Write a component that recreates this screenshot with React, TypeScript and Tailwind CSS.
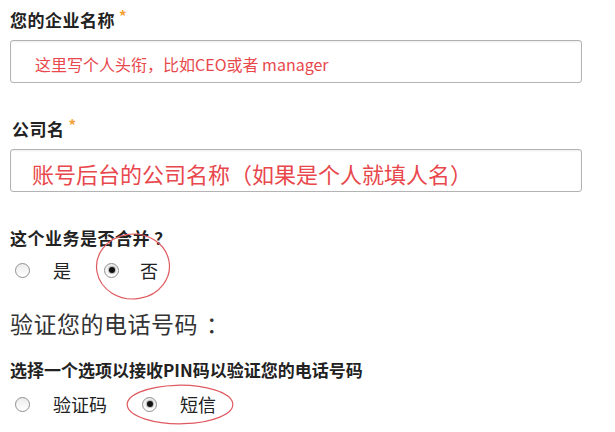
import React from "react";

const font = { fontFamily: '"Noto Sans CJK SC", "Liberation Sans", sans-serif' };

function Label({ text, required }: { text: string; required?: boolean }) {
  return (
    <div className="flex items-start text-[17px] font-bold leading-5 tracking-[0.5px] text-[#222]">
      <span>{text}</span>
      {required && (
        <span className="ml-[4px] mt-[-4px] text-[15px] font-bold text-[#f5a033]">*</span>
      )}
    </div>
  );
}

function Radio({ checked }: { checked?: boolean }) {
  return (
    <span className="flex h-[15px] w-[15px] shrink-0 items-center justify-center rounded-full border border-[#8f8f8f] bg-gradient-to-b from-[#ececec] to-white">
      {checked && <span className="h-[6px] w-[6px] rounded-full bg-[#111] shadow-[0_0_1px_1px_rgba(0,0,0,0.25)]" />}
    </span>
  );
}

function Ellipse({ className, rotate }: { className: string; rotate: number }) {
  return (
    <svg className={"pointer-events-none absolute " + className} viewBox="0 0 100 100" preserveAspectRatio="none">
      <ellipse
        cx="50"
        cy="50"
        rx="48"
        ry="47"
        fill="none"
        stroke="#df5a5f"
        strokeWidth="1.2"
        vectorEffect="non-scaling-stroke"
        transform={`rotate(${rotate} 50 50)`}
      />
    </svg>
  );
}

export default function App() {
  return (
    <main className="h-[432px] w-[615px] overflow-hidden bg-white pl-[10px]" style={font}>
      <div className="pt-[10px]">
        <Label text="您的企业名称" required />
      </div>
      <div className="mt-[10px] flex h-[43px] w-[572px] items-center rounded-[3px] border border-[#b3b3b3] pl-[24px] pt-[4px] shadow-[inset_0_1px_2px_rgba(0,0,0,0.08)]">
        <span className="text-[16px] text-[#e8474c]">这里写个人头衔，比如CEO或者 manager</span>
      </div>

      <div className="mt-[36px] pl-[2px]">
        <Label text="公司名" required />
      </div>
      <div className="mt-[10px] flex h-[43px] w-[572px] items-center rounded-[3px] border border-[#b3b3b3] pl-[21px] pt-[4px] shadow-[inset_0_1px_2px_rgba(0,0,0,0.08)]">
        <span className="text-[22px] leading-7 text-[#e8474c]">账号后台的公司名称（如果是个人就填人名）</span>
      </div>

      <div className="mt-[36px]">
        <Label text="这个业务是否合并 ？" />
      </div>
      <div className="relative mt-[10px] flex h-[24px] items-center pl-[5px] text-[18px] text-[#222]">
        <Radio />
        <span className="ml-[23px]">是</span>
        <span className="ml-[33px]">
          <Radio checked />
        </span>
        <span className="ml-[21px]">否</span>
        <Ellipse className="left-[85px] top-[-26px] h-[69px] w-[76px]" rotate={-10} />
      </div>

      <div className="mt-[27px] text-[23px] leading-7 tracking-[0.5px] text-[#333]">
        验证您的电话号码<span className="ml-[8px]">：</span>
      </div>

      <div className="mt-[23px]">
        <div className="text-[17px] font-bold leading-5 text-[#222]">选择一个选项以接收PIN码以验证您的电话号码</div>
      </div>
      <div className="relative mt-[12px] flex h-[24px] items-center pl-[5px] text-[18px] text-[#222]">
        <Radio />
        <span className="ml-[23px]">验证码</span>
        <span className="ml-[35px]">
          <Radio checked />
        </span>
        <span className="ml-[23px]">短信</span>
        <Ellipse className="left-[115px] top-[-8px] h-[41px] w-[110px]" rotate={-4} />
      </div>
    </main>
  );
}
